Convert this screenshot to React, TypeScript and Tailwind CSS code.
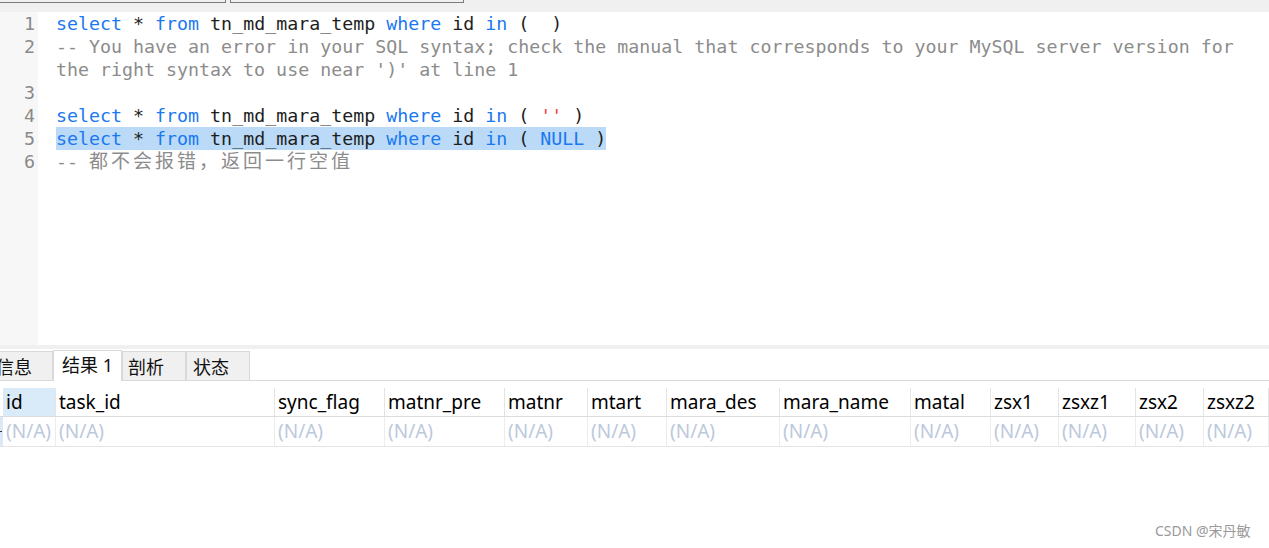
import React from "react";

const mono = "font-['DejaVu_Sans_Mono','Liberation_Mono','Noto_Sans_CJK_SC',monospace]";
const sans = "font-['Noto_Sans','Noto_Sans_CJK_SC',sans-serif]";

const K = ({ children }: { children: React.ReactNode }) => <span className="text-[#1a78f0]">{children}</span>;
const C = ({ children }: { children: React.ReactNode }) => <span className="text-[#8c8c8c]">{children}</span>;

type Line = { no?: number; content: React.ReactNode; selected?: boolean };

const lines: Line[] = [
  {
    no: 1,
    content: (
      <>
        <K>select</K> * <K>from</K> tn_md_mara_temp <K>where</K> id <K>in</K> (  )
      </>
    ),
  },
  { no: 2, content: <C>-- You have an error in your SQL syntax; check the manual that corresponds to your MySQL server version for</C> },
  { content: <C>the right syntax to use near ')' at line 1</C> },
  { no: 3, content: "" },
  {
    no: 4,
    content: (
      <>
        <K>select</K> * <K>from</K> tn_md_mara_temp <K>where</K> id <K>in</K> ( <span className="text-[#f53c4b]">''</span> )
      </>
    ),
  },
  {
    no: 5,
    selected: true,
    content: (
      <>
        <K>select</K> * <K>from</K> tn_md_mara_temp <K>where</K> id <K>in</K> ( <K>NULL</K> )
      </>
    ),
  },
  {
    no: 6,
    content: (
      <C>
        -- <span className="text-[19px] tracking-[3px]">都不会报错，返回一行空值</span>
      </C>
    ),
  },
];

const columns = [
  { name: "id", w: "w-[53px]" },
  { name: "task_id", w: "w-[219px]" },
  { name: "sync_flag", w: "w-[110px]" },
  { name: "matnr_pre", w: "w-[120px]" },
  { name: "matnr", w: "w-[83px]" },
  { name: "mtart", w: "w-[79px]" },
  { name: "mara_des", w: "w-[113px]" },
  { name: "mara_name", w: "w-[131px]" },
  { name: "matal", w: "w-[80px]" },
  { name: "zsx1", w: "w-[68px]" },
  { name: "zsxz1", w: "w-[77px]" },
  { name: "zsx2", w: "w-[68px]" },
  { name: "zsxz2", w: "w-[65px]" },
];

const tabs = [
  { label: "信息", w: "w-[64px] ml-[-11px] pl-[6px]" },
  { label: "结果 1", w: "w-[69px] pl-[8px]", active: true },
  { label: "剖析", w: "w-[64px] pl-[5px]" },
  { label: "状态", w: "w-[64px] pl-[6px]" },
];

export default function App() {
  return (
    <div className="relative w-[1269px] h-[548px] bg-white overflow-hidden">
      {/* top strip with the edges of the upper buttons */}
      <div className="flex h-[12px] bg-[#f0f0f0]">
        <div className="w-[227px] h-[3px] ml-[-1px] border-x border-b border-[#7a7a7a]" />
        <div className="w-[234px] h-[3px] ml-[4px] border-x border-b border-[#7a7a7a]" />
      </div>

      {/* editor */}
      <div className={`flex h-[333px] ${mono} text-[18.3px] leading-[23px] text-[#1e1e1e]`}>
        <div className="w-[38px] bg-[#f7f7f7] flex flex-col items-end pr-[3px] text-[#8a8a8a]">
          {lines.map((l, i) => (
            <div key={i} className="h-[23px]">
              {l.no ?? ""}
            </div>
          ))}
        </div>
        <div className="flex-1 flex flex-col pl-[18px]">
          {lines.map((l, i) => (
            <div key={i} className="h-[23px] whitespace-pre">
              <span className={l.selected ? "bg-[#bbdaf7] inline-block h-[23px]" : ""}>{l.content}</span>
            </div>
          ))}
        </div>
      </div>

      {/* splitter */}
      <div className="h-[4px] bg-[#f0f0f0]" />

      {/* result tabs */}
      <div className={`flex items-end h-[32px] border-b border-[#d9d9d9] ${sans} text-[18px] text-[#111]`}>
        {tabs.map((t) =>
          t.active ? (
            <div
              key={t.label}
              className={`${t.w} h-[31px] mb-[-1px] bg-white border-x border-t border-[#d9d9d9] leading-[28px] whitespace-nowrap`}
            >
              {t.label}
            </div>
          ) : (
            <div
              key={t.label}
              className={`${t.w} h-[29px] bg-[#f0f0f0] border-x border-t border-[#d9d9d9] leading-[30px] whitespace-nowrap`}
            >
              {t.label}
            </div>
          )
        )}
      </div>

      {/* grid */}
      <div className={`pt-[7px] ${sans} text-[19px]`}>
        <div className="flex h-[29px] border-b border-[#dcdcdc] pl-[3px]">
          {columns.map((c, i) => (
            <div
              key={c.name}
              className={`${c.w} shrink-0 border-r border-[#e4e4e4] pl-[3px] leading-[28px] text-black whitespace-nowrap ${
                i === 0 ? "bg-[#d9eaf8]" : ""
              }`}
            >
              {c.name}
            </div>
          ))}
        </div>
        <div className="flex h-[30px] border-b border-[#e4e4e4]">
          <div className="w-[3px] bg-[#dbe9f7] flex items-center">
            <div className="w-[2px] h-[1px] bg-[#333]" />
          </div>
          {columns.map((c) => (
            <div
              key={c.name}
              className={`${c.w} shrink-0 border-r border-[#ececec] pl-[3px] leading-[29px] text-[#bcc8dc] whitespace-nowrap`}
            >
              (N/A)
            </div>
          ))}
        </div>
      </div>

      <div className={`absolute left-[1155px] top-[520px] text-[14px] text-[#9a9a9a] ${sans}`}>CSDN @宋丹敏</div>
    </div>
  );
}
